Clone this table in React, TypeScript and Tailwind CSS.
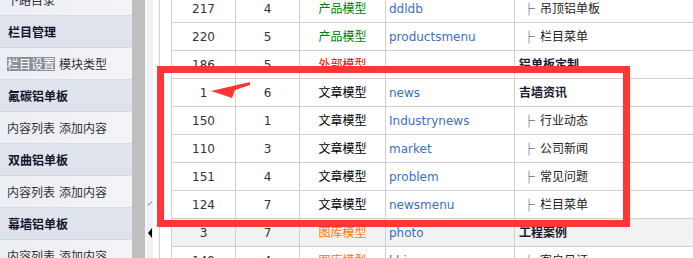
import React from 'react'

const menu = [
  { type: 'item', links: ['下路目录'] },
  { type: 'head', title: '栏目管理' },
  { type: 'item', links: ['栏目设置', '模块类型'], active: 0 },
  { type: 'head', title: '氟碳铝单板' },
  { type: 'item', links: ['内容列表', '添加内容'] },
  { type: 'head', title: '双曲铝单板' },
  { type: 'item', links: ['内容列表', '添加内容'] },
  { type: 'head', title: '幕墙铝单板' },
  { type: 'item', links: ['内容列表', '添加内容'] },
]

const rows = [
  { id: 217, order: 4, model: '产品模型', color: 'text-[#008000]', dir: 'ddldb', name: '吊顶铝单板', sub: true },
  { id: 220, order: 5, model: '产品模型', color: 'text-[#008000]', dir: 'productsmenu', name: '栏目菜单', sub: true },
  { id: 186, order: 5, model: '外部模型', color: 'text-[#ff0000]', dir: '', name: '铝单板定制', sub: false },
  { id: 1, order: 6, model: '文章模型', color: 'text-black', dir: 'news', name: '吉墙资讯', sub: false },
  { id: 150, order: 1, model: '文章模型', color: 'text-black', dir: 'Industrynews', name: '行业动态', sub: true },
  { id: 110, order: 3, model: '文章模型', color: 'text-black', dir: 'market', name: '公司新闻', sub: true },
  { id: 151, order: 4, model: '文章模型', color: 'text-black', dir: 'problem', name: '常见问题', sub: true },
  { id: 124, order: 7, model: '文章模型', color: 'text-black', dir: 'newsmenu', name: '栏目菜单', sub: true },
  { id: 3, order: 7, model: '图库模型', color: 'text-[#ff7700]', dir: 'photo', name: '工程案例', sub: false, hover: true },
  { id: 149, order: 4, model: '图库模型', color: 'text-[#ff7700]', dir: 'khjz', name: '客户见证', sub: true },
]

export default function App() {
  return (
    <div className="w-[693px] h-[258px] overflow-hidden flex bg-white text-[12px] font-['DejaVu_Sans','Noto_Sans_CJK_SC',sans-serif]">
      {/* left menu */}
      <div className="w-[132px] shrink-0 -mt-4 font-['Noto_Sans_CJK_SC',sans-serif]">
        {menu.map((m, i) =>
          m.type === 'head' ? (
            <div key={i} className="h-[32px] flex items-center pl-[8px] bg-[#dfe3eb] border-b border-[#d3d7df] font-bold text-[#14142a]">
              {m.title}
            </div>
          ) : (
            <div key={i} className="h-[32px] flex items-center pl-[7px] bg-gradient-to-r from-[#eceef5] to-[#f3f4f8] border-b border-[#d9dce3] text-[#333]">
              {m.links!.map((l, j) => (
                <span key={j} className={j === m.active ? 'bg-[#8b9099] text-white mr-[4px] leading-[14px]' : 'mr-[4px]'}>
                  {l}
                </span>
              ))}
            </div>
          )
        )}
      </div>

      {/* splitter */}
      <div className="w-[13px] shrink-0 bg-[#bfbfbf]" />
      <div className="w-[8px] shrink-0 bg-[#eef0f4] border-l-2 border-[#f7f7f9] flex flex-col items-center">
        <div className="mt-[203px] w-[6px] h-[1px] bg-[#9a8ad0] -rotate-45" />
        <div className="mt-[24px] w-0 h-0 border-y-[5px] border-y-transparent border-r-[4px] border-r-black" />
      </div>

      {/* content */}
      <div className="flex-1 relative ml-[6px] border-l border-[#d0d0d0] pl-[11px]">
        <div className="-mt-[5px] border-l border-[#d0d0d0]">
          {rows.map((r) => (
            <div key={r.id} className={`flex h-[28px] border-b border-[#d0d0d0] ${r.hover ? 'bg-[#f2f2f2]' : ''}`}>
              <div className="w-[64px] shrink-0 border-r border-[#d0d0d0] flex items-center justify-center text-[#333]">{r.id}</div>
              <div className="w-[64px] shrink-0 border-r border-[#d0d0d0] flex items-center justify-center text-[#333]">{r.order}</div>
              <div className={`w-[86px] shrink-0 border-r border-[#d0d0d0] flex items-center justify-center ${r.color}`}>{r.model}</div>
              <div className="w-[129px] shrink-0 border-r border-[#d0d0d0] flex items-center pl-[3px] text-[#3b6fc4]">{r.dir}</div>
              <div className="flex-1 flex items-center pl-[4px] text-[#222]">
                {r.sub ? (
                  <>
                    <span className="inline-block w-[12px] ml-[4px] mr-[5px] text-center font-bold text-[#1d2a5a] font-['Noto_Sans_CJK_SC',sans-serif]">├</span>
                    <span>{r.name}</span>
                  </>
                ) : (
                  <span className="font-bold text-[#1a1a33]">{r.name}</span>
                )}
              </div>
            </div>
          ))}
        </div>

        {/* annotation */}
        <div className="absolute left-[-3px] top-[66px] w-[473px] h-[161px] border-[7px] border-[#ff3636] pointer-events-none" />
        <svg className="absolute left-0 top-0 pointer-events-none" width="540" height="258" viewBox="160 0 540 258">
          <polygon points="211,91 250,82 250,85 235,90 232,98" fill="#ff3636" />
        </svg>
      </div>
    </div>
  )
}
